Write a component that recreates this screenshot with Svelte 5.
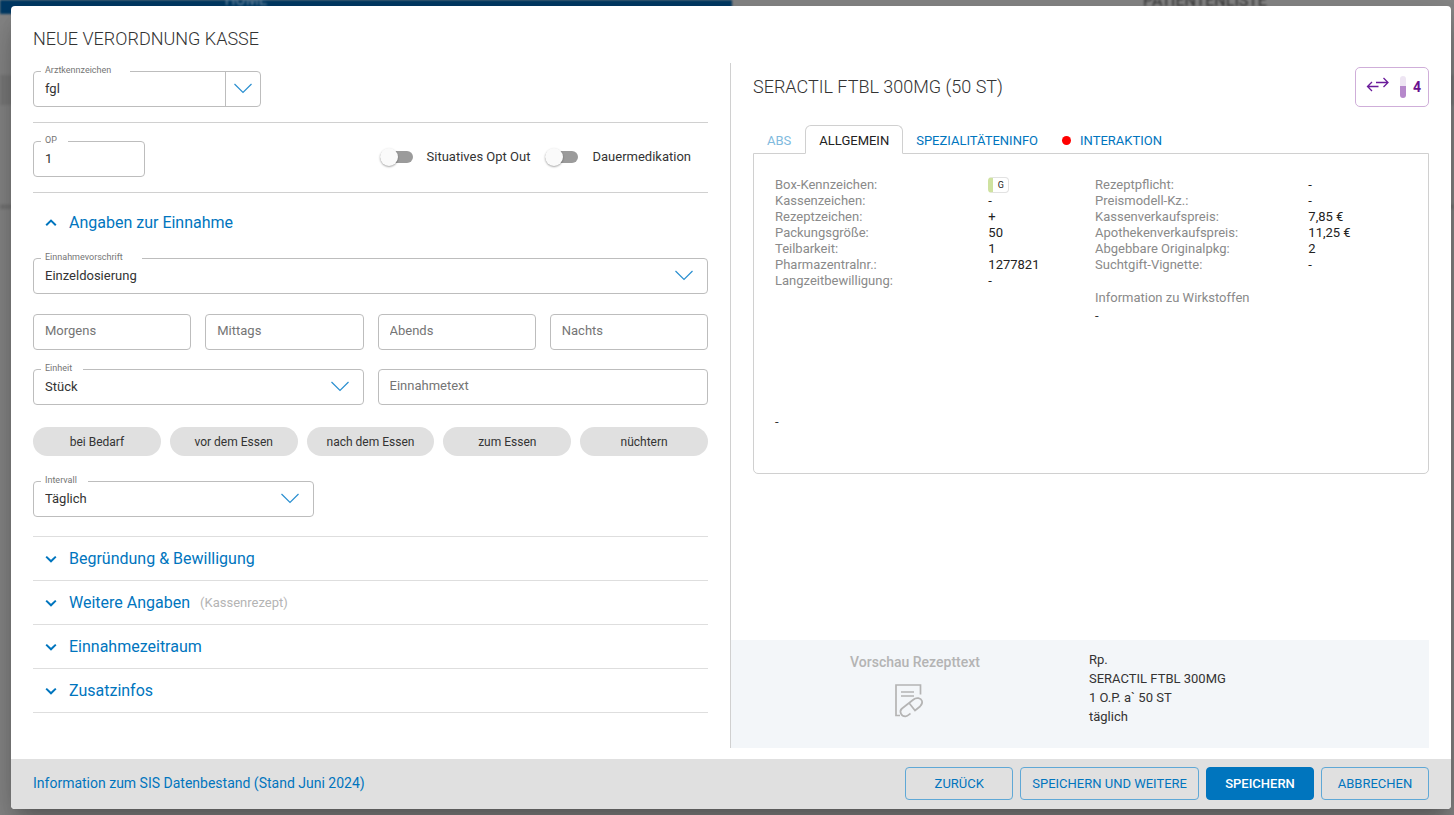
<script lang="ts">
	let arzt = $state('fgl');
	let op = $state('1');
	let optOut = $state(false);
	let dauer = $state(false);
	let vorschrift = $state('Einzeldosierung');
	let einheit = $state('Stück');
	let intervall = $state('Täglich');
	let einnahmeOpen = $state(true);

	const zeiten = ['Morgens', 'Mittags', 'Abends', 'Nachts'];
	const chips = ['bei Bedarf', 'vor dem Essen', 'nach dem Essen', 'zum Essen', 'nüchtern'];

	const sections = [
		{ title: 'Begründung & Bewilligung' },
		{ title: 'Weitere Angaben', hint: '(Kassenrezept)' },
		{ title: 'Einnahmezeitraum' },
		{ title: 'Zusatzinfos' }
	];

	const infoLeft = [
		['Kassenzeichen:', '-'],
		['Rezeptzeichen:', '+'],
		['Packungsgröße:', '50'],
		['Teilbarkeit:', '1'],
		['Pharmazentralnr.:', '1277821'],
		['Langzeitbewilligung:', '-']
	];

	const infoRight = [
		['Rezeptpflicht:', '-'],
		['Preismodell-Kz.:', '-'],
		['Kassenverkaufspreis:', '7,85 €'],
		['Apothekenverkaufspreis:', '11,25 €'],
		['Abgebbare Originalpkg:', '2'],
		['Suchtgift-Vignette:', '-']
	];
</script>

{#snippet chevron()}
	<svg class="chevron" width="18" height="11" viewBox="0 0 18 11" aria-hidden="true">
		<path d="M0.5 1L9 9.5L17.5 1" fill="none" stroke="#2a8fd0" stroke-width="1.2" />
	</svg>
{/snippet}

{#snippet caret(up: boolean)}
	<svg class="caret" width="12" height="8" viewBox="0 0 12 8" aria-hidden="true">
		<path d={up ? 'M1.2 6.3L6 1.6L10.8 6.3' : 'M1.2 1.6L6 6.3L10.8 1.6'} fill="none" stroke="#0075be" stroke-width="2" />
	</svg>
{/snippet}

<div class="page">
	<div class="backdrop" aria-hidden="true">
		<div class="topbar"><span>HOME</span></div>
		<div class="list-title">PATIENTENLISTE</div>
	</div>

	<div class="dialog" role="dialog" aria-labelledby="dialog-title">
		<div class="body">
			<div class="form">
				<h1 id="dialog-title">NEUE VERORDNUNG KASSE</h1>

				<div class="block first">
					<div class="field arzt">
						<label class="long" for="arzt">Arztkennzeichen</label>
						<input id="arzt" type="text" bind:value={arzt} />
						<button class="drop" type="button" aria-label="Arzt wählen">{@render chevron()}</button>
					</div>
				</div>

				<div class="block op-row">
					<div class="field op">
						<label for="op">OP</label>
						<input id="op" type="text" bind:value={op} />
					</div>
					<div class="toggles">
						<label class="toggle">
							<input type="checkbox" bind:checked={optOut} />
							<span>Situatives Opt Out</span>
						</label>
						<label class="toggle">
							<input type="checkbox" bind:checked={dauer} />
							<span>Dauermedikation</span>
						</label>
					</div>
				</div>

				<button class="section-head open" type="button" onclick={() => (einnahmeOpen = !einnahmeOpen)}>
					{@render caret(einnahmeOpen)}
					Angaben zur Einnahme
				</button>

				{#if einnahmeOpen}
					<div class="einnahme">
						<div class="field">
							<label class="long" for="vorschrift">Einnahmevorschrift</label>
							<select id="vorschrift" bind:value={vorschrift}>
								<option>Einzeldosierung</option>
							</select>
							{@render chevron()}
						</div>

						<div class="grid4">
							{#each zeiten as zeit}
								<div class="field">
									<input type="text" placeholder={zeit} aria-label={zeit} />
								</div>
							{/each}
						</div>

						<div class="grid2">
							<div class="field">
								<label for="einheit">Einheit</label>
								<select id="einheit" bind:value={einheit}>
									<option>Stück</option>
								</select>
								{@render chevron()}
							</div>
							<div class="field">
								<input type="text" placeholder="Einnahmetext" aria-label="Einnahmetext" />
							</div>
						</div>

						<div class="chips">
							{#each chips as chip}
								<button type="button">{chip}</button>
							{/each}
						</div>

						<div class="field intervall">
							<label for="intervall">Intervall</label>
							<select id="intervall" bind:value={intervall}>
								<option>Täglich</option>
							</select>
							{@render chevron()}
						</div>
					</div>
				{/if}

				<div class="sections">
					{#each sections as section}
						<button class="section-head" type="button">
							{@render caret(false)}
							{section.title}
							{#if section.hint}<small>{section.hint}</small>{/if}
						</button>
					{/each}
				</div>
			</div>

			<div class="detail">
				<div class="drug">
					<h2>SERACTIL FTBL 300MG (50 ST)</h2>
					<button class="interactions" type="button" aria-label="Interaktionen">
						<svg width="24" height="16" viewBox="0 0 24 16" fill="none" stroke="#6a1b9a" stroke-width="1.3" aria-hidden="true">
							<path d="M10 5.5H22M17.5 1L22 5.5L17.5 10M12.5 9.5H1.5M6 5L1.5 9.5L6 14" />
						</svg>
						<span class="gauge"></span>
						<b>4</b>
					</button>
				</div>

				<div class="tabs" role="tablist">
					<button class="abs" type="button" role="tab" disabled>ABS</button>
					<button class="active" type="button" role="tab" aria-selected="true">ALLGEMEIN</button>
					<button type="button" role="tab">SPEZIALITÄTENINFO</button>
					<button type="button" role="tab"><i></i>INTERAKTION</button>
				</div>

				<div class="panel">
					<div class="cols">
						<dl>
							<dt>Box-Kennzeichen:</dt>
							<dd><span class="box-g">G</span></dd>
							{#each infoLeft as [name, value]}
								<dt>{name}</dt>
								<dd>{value}</dd>
							{/each}
						</dl>
						<div>
							<dl>
								{#each infoRight as [name, value]}
									<dt>{name}</dt>
									<dd>{value}</dd>
								{/each}
							</dl>
							<div class="wirkstoffe">
								<h3>Information zu Wirkstoffen</h3>
								<p>-</p>
							</div>
						</div>
					</div>
					<p class="note">-</p>
				</div>

				<div class="preview">
					<div class="preview-label">
						<strong>Vorschau Rezepttext</strong>
						<svg width="40" height="34" viewBox="0 0 40 34" fill="none" stroke="#b4b4b4" stroke-width="1.7" aria-hidden="true">
							<path d="M5 31.5H1V1H25.5V10.5M6 8H19M6 12H19" />
							<path d="M7 24.500L18.500 15.500C21.500 13 26 14 27 17C27.800 19.500 26.500 21 25 22.500L20 26.500L14.500 19.500M7 24.500C3.500 27.500 6.500 32.500 10.500 32.300C13 32.200 14 30.500 15.500 29.500" />
						</svg>
					</div>
					<p>Rp.<br />SERACTIL FTBL 300MG<br />1 O.P. a` 50 ST<br />täglich</p>
				</div>
			</div>
		</div>

		<footer>
			<a href="#sis">Information zum SIS Datenbestand (Stand Juni 2024)</a>
			<div class="actions">
				<button type="button">ZURÜCK</button>
				<button type="button">SPEICHERN UND WEITERE</button>
				<button class="primary" type="button">SPEICHERN</button>
				<button type="button">ABBRECHEN</button>
			</div>
		</footer>
	</div>
</div>

<style>
	:global(body) {
		background: #888;
	}

	.page {
		position: relative;
		display: flex;
		min-height: 100vh;
		box-sizing: border-box;
		padding: 6px 3px 6px 11px;
		overflow: hidden;
		font-family: Roboto, 'Liberation Sans', sans-serif;
		font-size: 13px;
		color: #333;
	}

	.page *,
	.page *::before {
		box-sizing: border-box;
	}

	.backdrop {
		position: absolute;
		inset: 0;
		display: flex;
		align-items: flex-start;
		background: linear-gradient(#888 74px, #7c7c7c 76px 104px, #888 106px 204px, #777 205px 208px, #888 210px);
		filter: blur(1px);
	}

	.topbar {
		display: flex;
		justify-content: center;
		width: 732px;
		height: 14px;
		padding-right: 240px;
		background: #003a66;
		color: #6f8fa8;
		font-size: 15px;
		line-height: 1px;
	}

	.list-title {
		flex: 1;
		padding-left: 224px;
		text-align: center;
		font-size: 16px;
		line-height: 1px;
		color: #333;
	}

	.dialog {
		position: relative;
		display: flex;
		flex-direction: column;
		flex: 1;
		border-radius: 4px;
		background: #fff;
		overflow: hidden;
		box-shadow:
			0 11px 15px -7px rgba(0, 0, 0, 0.2),
			0 24px 38px 3px rgba(0, 0, 0, 0.14),
			0 9px 46px 8px rgba(0, 0, 0, 0.12);
	}

	button,
	input,
	select {
		font: inherit;
		color: inherit;
	}

	button {
		border: none;
		background: none;
		padding: 0;
		cursor: pointer;
	}

	h1,
	h2,
	h3,
	p,
	dl,
	dd {
		margin: 0;
		font-weight: 400;
	}

	h1,
	h2 {
		font-size: 18px;
		font-weight: 300;
		line-height: 20px;
	}

	.body {
		display: grid;
		grid-template-columns: 1fr 1fr;
		flex: 1;
		padding: 23px 22px 11px;
	}

	/* left side */
	.form {
		display: flex;
		flex-direction: column;
		padding-right: 23px;
		background: linear-gradient(#d0d0d0, #d0d0d0) right 34px / 1px 100% no-repeat;
	}

	.block {
		display: flex;
		padding: 18px 0 15px;
		border-bottom: 1px solid #d0d0d0;
	}

	.block.first {
		padding-top: 22px;
	}

	.op-row {
		justify-content: space-between;
	}

	.field {
		position: relative;
		display: flex;
		height: 36px;
		border: 1px solid #bdbdbd;
		border-radius: 4px;
	}

	.field > label {
		position: absolute;
		top: -8px;
		left: 7px;
		padding: 0 11px 0 4px;
		background: #fff;
		color: #757575;
		font-size: 9px;
		line-height: 12px;
	}

	.field > label.long {
		padding-right: 19px;
	}

	.field > input,
	.field > select {
		flex: 1;
		width: 100%;
		min-width: 0;
		padding: 0 11px 2px;
		border: none;
		border-radius: 4px;
		outline: none;
		background: transparent;
		appearance: none;
	}

	.field > input:placeholder-shown {
		padding-bottom: 4px;
	}

	.field > input::placeholder {
		color: #757575;
		opacity: 1;
	}

	.field > .chevron {
		position: absolute;
		top: 11px;
		right: 14px;
		pointer-events: none;
	}

	.arzt {
		width: 228px;
	}

	.drop {
		display: flex;
		align-items: center;
		justify-content: center;
		width: 35px;
		padding-bottom: 2px;
		border-left: 1px solid #bdbdbd;
	}

	.op {
		width: 112px;
	}

	.toggles {
		display: flex;
		align-items: center;
		gap: 15px;
		padding-right: 17px;
		padding-bottom: 5px;
	}

	.toggle {
		display: flex;
		align-items: center;
		gap: 14px;
	}

	.toggle input {
		position: relative;
		width: 33px;
		height: 12px;
		margin: 0;
		border-radius: 6px;
		background: #9b9b9b;
		appearance: none;
	}

	.toggle input::before {
		content: '';
		position: absolute;
		top: -3px;
		left: 0;
		width: 18px;
		height: 18px;
		border-radius: 50%;
		background: #fafafa;
		box-shadow: 0 1px 2px rgba(0, 0, 0, 0.35);
	}

	.toggle input:checked::before {
		left: 15px;
	}

	.section-head {
		display: flex;
		align-items: center;
		height: 44px;
		padding-left: 12px;
		color: #0075be;
		font-size: 16px;
	}

	.section-head .caret {
		margin-right: 12px;
	}

	.section-head.open {
		height: 59px;
	}

	.section-head small {
		padding-left: 10px;
		color: #b4b4b4;
		font-size: 13px;
	}

	.einnahme {
		display: flex;
		flex-direction: column;
		padding: 6px 0 19px;
	}

	.grid4 {
		display: grid;
		grid-template-columns: repeat(4, 1fr);
		gap: 14px;
		margin: 20px 0 19px;
	}

	.grid2 {
		display: grid;
		grid-template-columns: 1fr 1fr;
		gap: 14px;
	}

	.chips {
		display: grid;
		grid-template-columns: repeat(5, 1fr);
		gap: 9px;
		margin: 22px 0 25px;
	}

	.chips button {
		height: 29px;
		border-radius: 15px;
		background: #e0e0e0;
		font-size: 12px;
	}

	.intervall {
		width: 281px;
	}

	.sections {
		display: flex;
		flex-direction: column;
		border-top: 1px solid #dedede;
	}

	.sections .section-head {
		border-bottom: 1px solid #dedede;
	}

	/* right side */
	.detail {
		display: flex;
		flex-direction: column;
		padding-top: 38px;
	}

	.drug {
		display: flex;
		align-items: center;
		justify-content: space-between;
		padding-left: 22px;
	}

	.interactions {
		display: flex;
		align-items: center;
		gap: 7px;
		height: 40px;
		padding: 0 7px 0 10px;
		border: 1px solid #cfaed9;
		border-radius: 5px;
		color: #6a0f8e;
		font-size: 14px;
	}

	.interactions svg {
		margin-bottom: 4px;
	}

	.gauge {
		width: 6px;
		height: 22px;
		margin-left: 3px;
		border-radius: 3px;
		background: linear-gradient(#eee5f3 45%, #b688cb 45%);
	}

	.tabs {
		display: flex;
		align-items: flex-end;
		margin: 18px 0 -1px 22px;
		color: #0075be;
	}

	.tabs button {
		display: flex;
		align-items: center;
		height: 29px;
		padding: 2px 11px 0 13px;
	}

	.tabs .abs {
		padding: 2px 14px 0;
		color: #80bade;
	}

	.tabs .active {
		position: relative;
		padding-right: 13px;
		border: 1px solid #d0d0d0;
		border-bottom-color: #fff;
		border-radius: 6px 6px 0 0;
		background: #fff;
		color: #222;
	}

	.tabs i {
		width: 9px;
		height: 9px;
		margin-right: 9px;
		border-radius: 50%;
		background: #f00;
	}

	.panel {
		min-height: 321px;
		margin-left: 22px;
		padding: 23px 13px 0 21px;
		border: 1px solid #d0d0d0;
		border-radius: 0 0 5px 5px;
	}

	.cols {
		display: grid;
		grid-template-columns: 1fr 1fr;
	}

	dl {
		display: grid;
		grid-template-columns: 2fr 1fr;
		grid-auto-rows: 16px;
		line-height: 16px;
	}

	dt,
	h3 {
		color: #8a8a8a;
		font-size: 13px;
		line-height: 16px;
	}

	dd {
		color: #222;
	}

	.box-g {
		display: block;
		width: 21px;
		height: 16px;
		border: 1px solid #e2e2e2;
		border-left: 5px solid #cfe2a0;
		border-radius: 4px;
		font-size: 9px;
		line-height: 14px;
		text-align: center;
	}

	.wirkstoffe {
		padding-top: 17px;
	}

	.wirkstoffe p {
		padding-top: 2px;
		line-height: 16px;
	}

	.note {
		padding-top: 90px;
		line-height: 16px;
	}

	.preview {
		display: grid;
		grid-template-columns: 1fr 1fr;
		gap: 4px;
		height: 108px;
		margin-top: auto;
		padding: 10px 0 0 14px;
		background: #f3f6f9;
		line-height: 19px;
	}

	.preview-label {
		display: flex;
		flex-direction: column;
		align-items: center;
		gap: 12px;
		padding-top: 2px;
		color: #b4b4b4;
	}

	.preview-label strong {
		font-size: 14px;
		font-weight: 500;
		line-height: 20px;
	}

	footer {
		display: flex;
		align-items: center;
		justify-content: space-between;
		height: 50px;
		padding: 0 22px 2px;
		background: #e0e0e0;
	}

	footer a {
		color: #0075be;
		font-size: 14px;
		line-height: 20px;
		text-decoration: none;
	}

	.actions {
		display: flex;
		gap: 7px;
	}

	.actions button {
		min-width: 108px;
		height: 33px;
		padding: 0 11px;
		border: 1px solid #5fa8d6;
		border-radius: 4px;
		color: #0075be;
	}

	.actions .primary {
		border-color: #0075be;
		background: #0075be;
		color: #fff;
		font-weight: 500;
	}
</style>
